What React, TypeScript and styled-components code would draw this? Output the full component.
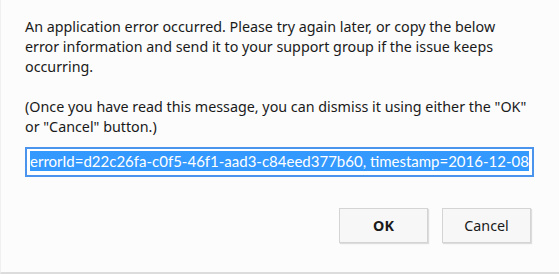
import React from "react";
import styled, { createGlobalStyle } from "styled-components";

const Global = createGlobalStyle`
  html, body { margin: 0; padding: 0; background: #fcfcfc; }
  #root { height: 274px; }
`;

const Dialog = styled.div`
  box-sizing: border-box;
  height: 274px;
  width: 559px;
  background: #fcfcfc;
  border-left: 1px solid #f0f0f0;
  border-bottom: 2px solid #dcdcdc;
  padding: 17px 25px 0 24px;
  display: flex;
  flex-direction: column;
  font-family: "Noto Sans", "Open Sans", sans-serif;
  font-size: 14.3px;
  line-height: 20px;
  color: #1a1a1a;
`;

const Message = styled.p`
  margin: 0;
  white-space: nowrap;
`;

const Spacer = styled.div`
  height: 20px;
`;

const ErrorField = styled.div`
  box-sizing: border-box;
  margin-top: 10px;
  height: 30px;
  border: 2px solid #4a94ee;
  background: #ffffff;
  padding: 2px 3px;
  overflow: hidden;
  white-space: nowrap;
`;

const Selected = styled.span`
  display: block;
  height: 20px;
  line-height: 20px;
  background: #3399ff;
  color: #ffffff;
  overflow: hidden;
  white-space: nowrap;
  font-family: "Lato", "Noto Sans", sans-serif;
  font-size: 15px;
`;

const Actions = styled.div`
  display: flex;
  justify-content: flex-end;
  gap: 14px;
  margin-top: 31px;
  padding-right: 3px;
`;

const Button = styled.button<{ $primary?: boolean }>`
  box-sizing: border-box;
  width: 89px;
  height: 35px;
  background: #f7f7f7;
  border: 1px solid #d4d4d4;
  box-shadow: 1px 1px 1px rgba(0, 0, 0, 0.12);
  font-family: "Noto Sans", "Open Sans", sans-serif;
  font-size: 14.3px;
  font-weight: ${(p) => (p.$primary ? 700 : 400)};
  color: #1a1a1a;
  padding: 0;
`;

export default function App() {
  return (
    <>
      <Global />
      <Dialog>
        <Message>
          An application error occurred. Please try again later, or copy the below
          <br />
          error information and send it to your support group if the issue keeps
          <br />
          occurring.
        </Message>
        <Spacer />
        <Message>
          (Once you have read this message, you can dismiss it using either the "OK"
          <br />
          or "Cancel" button.)
        </Message>
        <ErrorField>
          <Selected>errorId=d22c26fa-c0f5-46f1-aad3-c84eed377b60, timestamp=2016-12-08</Selected>
        </ErrorField>
        <Actions>
          <Button $primary>OK</Button>
          <Button>Cancel</Button>
        </Actions>
      </Dialog>
    </>
  );
}
